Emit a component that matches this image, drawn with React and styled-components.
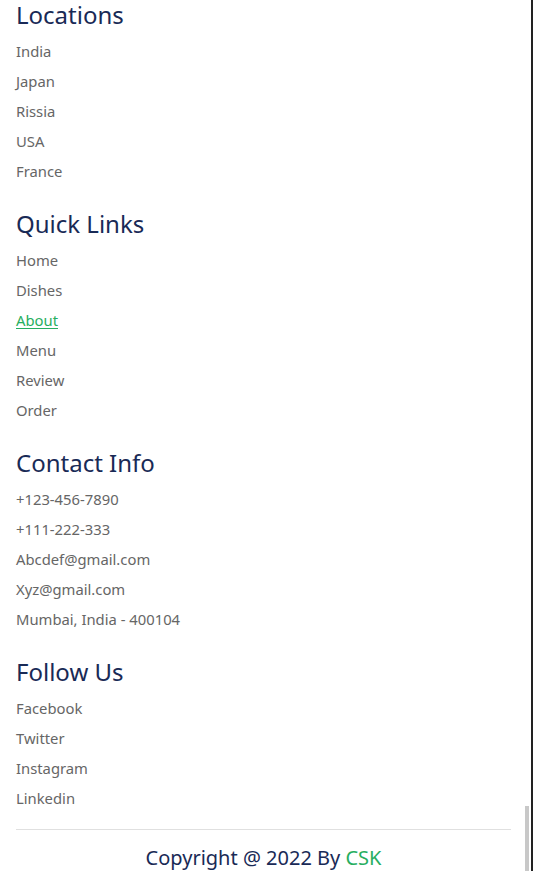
import React from 'react'
import styled, { createGlobalStyle } from 'styled-components'

const GlobalStyle = createGlobalStyle`
    html, body {
        margin: 0;
        padding: 0;
        background: #fff;
        overflow: hidden;
    }
    * {
        box-sizing: border-box;
        font-family: "Noto Sans", "Open Sans", sans-serif;
    }
`

const Page = styled.div`
    display: flex;
    height: 871px;
    width: 533px;
    border-right: 2px solid #222;
`

const Footer = styled.footer`
    flex: 1;
    padding: 0 12px 0 16px;
`

const Box = styled.div`
    margin-bottom: 23px;
`

const Title = styled.h3`
    margin: 0 0 6px;
    font-size: 24px;
    line-height: 30px;
    font-weight: 400;
    color: #192a56;
`

const Link = styled.a`
    display: block;
    height: 30px;
    line-height: 30px;
    font-size: 14.8px;
    color: ${({ active }) => (active ? '#27ae60' : '#666')};
    text-decoration: ${({ active }) => (active ? 'underline' : 'none')};
    text-underline-offset: 2px;
`

const Credit = styled.div`
    border-top: 1px solid #e0e0e0;
    margin-top: -7px;
    padding-top: 15px;
    text-align: center;
    font-size: 20px;
    line-height: 26px;
    color: #192a56;

    span {
        color: #27ae60;
    }
`

const ScrollTrack = styled.div`
    width: 8px;
    display: flex;
    flex-direction: column;
    justify-content: flex-end;
    padding: 0 2px;
`

const Thumb = styled.div`
    height: 65px;
    background: #c8c8c8;
`

const sections = [
    { title: 'Locations', links: ['India', 'Japan', 'Rissia', 'USA', 'France'] },
    { title: 'Quick Links', links: ['Home', 'Dishes', 'About', 'Menu', 'Review', 'Order'] },
    { title: 'Contact Info', links: ['+123-456-7890', '+111-222-333', 'Abcdef@gmail.com', 'Xyz@gmail.com', 'Mumbai, India - 400104'] },
    { title: 'Follow Us', links: ['Facebook', 'Twitter', 'Instagram', 'Linkedin'] },
]

const App = () => {
    return (
        <>
            <GlobalStyle />
            <Page>
                <Footer>
                    {sections.map((s) => (
                        <Box key={s.title}>
                            <Title>{s.title}</Title>
                            {s.links.map((l) => (
                                <Link key={l} href="#" active={l === 'About' ? 1 : 0}>{l}</Link>
                            ))}
                        </Box>
                    ))}
                    <Credit>
                        Copyright @ 2022 By <span>CSK</span>
                    </Credit>
                </Footer>
                <ScrollTrack>
                    <Thumb />
                </ScrollTrack>
            </Page>
        </>
    )
}

export default App
